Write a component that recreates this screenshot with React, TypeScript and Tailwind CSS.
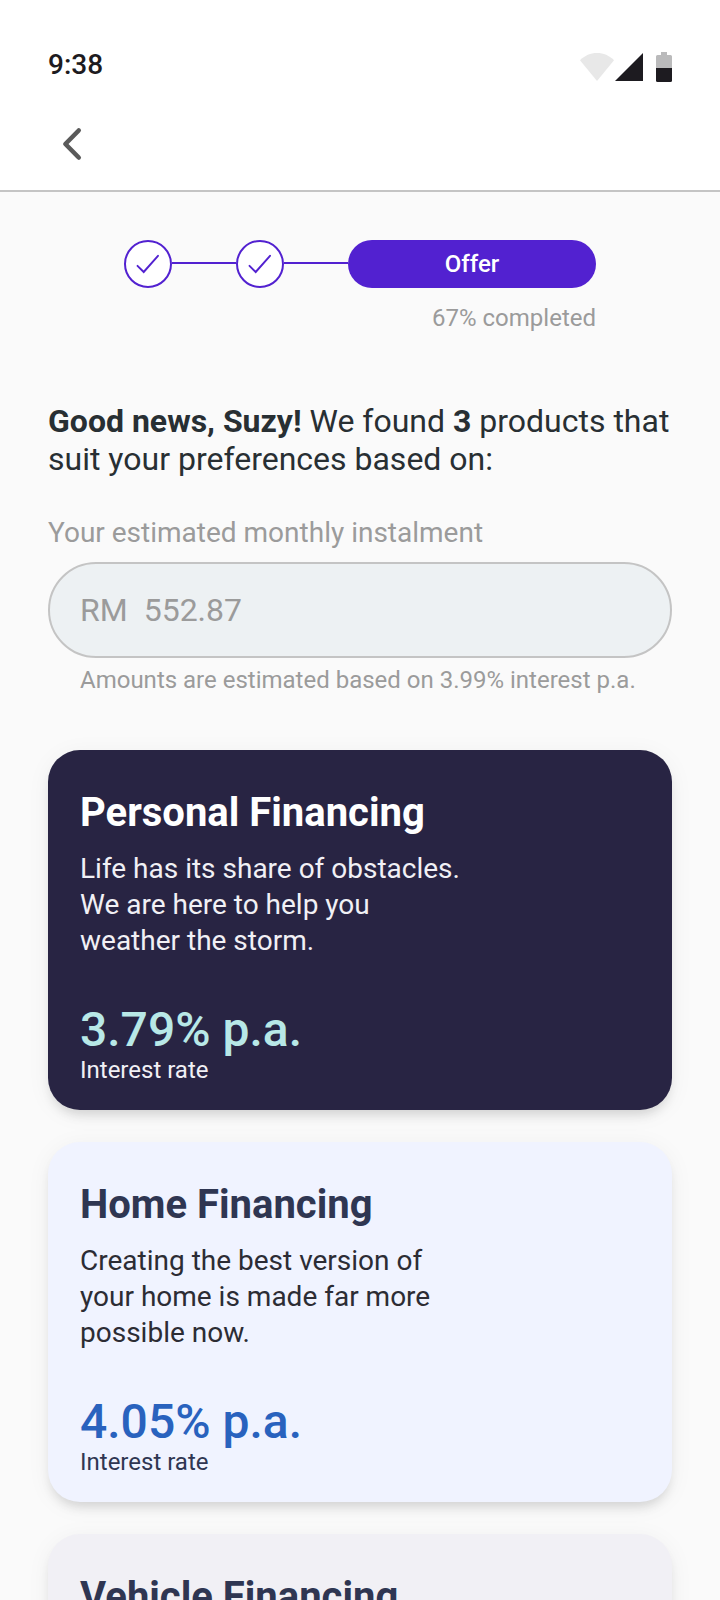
import clsx from 'clsx';

type Product = {
  title: string;
  description?: string;
  rate?: string;
  cardClass: string;
  titleClass: string;
  textClass: string;
  rateClass: string;
  captionClass: string;
};

const products: Product[] = [
  {
    title: 'Personal Financing',
    description: 'Life has its share of obstacles. We are here to help you weather the storm.',
    rate: '3.79% p.a.',
    cardClass: 'bg-[#282443]',
    titleClass: 'text-white',
    textClass: 'text-[#f1f0f5]',
    rateClass: 'text-[#b8e8e7]',
    captionClass: 'text-[#f1f0f5]',
  },
  {
    title: 'Home Financing',
    description: 'Creating the best version of your home is made far more possible now.',
    rate: '4.05% p.a.',
    cardClass: 'bg-[#f0f3ff]',
    titleClass: 'text-[#2f3652]',
    textClass: 'text-[#2c2c34]',
    rateClass: 'text-[#2962be]',
    captionClass: 'text-[#2f3652]',
  },
  {
    title: 'Vehicle Financing',
    cardClass: 'bg-[#f1f0f5]',
    titleClass: 'text-[#2f3652]',
    textClass: 'text-[#2c2c34]',
    rateClass: 'text-[#2962be]',
    captionClass: 'text-[#2f3652]',
  },
];

const StatusIcons = () => (
  <svg width="92" height="32" viewBox="0 0 92 32" aria-hidden="true">
    {/* wifi */}
    <path d="M0 8.2C4.6 3.6 10.5 1 17 1s12.400 2.600 17 7.200L17 29z" fill="#e8e8e8" />
    {/* signal */}
    <path d="M63 1v28H35z" fill="#1d1b20" />
    {/* battery */}
    <path
      d="M81 0h6v3h3.500a1.500 1.500 0 0 1 1.500 1.500V16H76V4.500A1.500 1.500 0 0 1 77.500 3H81z"
      fill="#bababb"
    />
    <path d="M76 16h16v12.500a1.500 1.500 0 0 1-1.500 1.500h-13a1.500 1.500 0 0 1-1.500-1.500z" fill="#1d1b20" />
  </svg>
);

const Header = () => (
  <header className="shrink-0 border-b-2 border-[#c4c4c4] bg-white px-12 pt-11 pb-[22px]">
    <div className="flex h-10 items-end justify-between">
      <span className="text-[28px] leading-[38px] font-medium text-[#1d1b20]">9:38</span>
      <StatusIcons />
    </div>
    <button type="button" aria-label="Back" className="mt-9 block size-12 cursor-pointer">
      <svg viewBox="0 0 48 48" fill="none" aria-hidden="true">
        <path
          d="M30.700 10.500 17.400 24l13.300 13.500"
          stroke="#5a5a5a"
          strokeWidth="4.600"
          strokeLinecap="round"
          strokeLinejoin="round"
        />
      </svg>
    </button>
  </header>
);

const CompletedStep = () => (
  <>
    <div className="flex size-12 shrink-0 items-center justify-center rounded-full border-2 border-[#5221d0] bg-white">
      <svg width="24" height="24" viewBox="0 0 24 24" fill="none" aria-hidden="true">
        <path
          d="m1.500 13.800 6.200 6.200L22 3.800"
          stroke="#5221d0"
          strokeWidth="1.900"
          strokeLinecap="round"
          strokeLinejoin="miter"
        />
      </svg>
    </div>
    <div className="mb-0.5 h-0.5 flex-1 bg-[#5221d0]" />
  </>
);

const Stepper = () => (
  <div className="mx-auto max-w-[472px]">
    <div className="flex items-center">
      <CompletedStep />
      <CompletedStep />
      <div className="flex h-12 w-62 items-center justify-center rounded-full bg-[#5221d0] text-2xl font-medium text-white">
        Offer
      </div>
    </div>
    <p className="mt-4 text-right text-2xl leading-7 text-[#9b9b9b]">67% completed</p>
  </div>
);

const ProductCard = ({ product }: { product: Product }) => (
  <article
    className={clsx(
      'min-h-90 rounded-[32px] px-8 pt-[41px] pb-7 shadow-[0_8px_12px_-4px_rgba(0,0,0,0.14),0_4px_24px_rgba(0,0,0,0.05)]',
      product.cardClass
    )}
  >
    <h2 className={clsx('text-[40px] leading-11 font-bold', product.titleClass)}>{product.title}</h2>
    {product.description && (
      <p className={clsx('mt-4 max-w-96 text-[28px] leading-9', product.textClass)}>
        {product.description}
      </p>
    )}
    {product.rate && (
      <>
        <p className={clsx('mt-[43px] text-5xl leading-14 font-medium', product.rateClass)}>
          {product.rate}
        </p>
        <p className={clsx('text-2xl leading-6', product.captionClass)}>Interest rate</p>
      </>
    )}
  </article>
);

const App = () => {
  return (
    <div className="flex h-screen flex-col bg-[#fafafa] font-[Roboto,sans-serif]">
      <Header />
      <main className="min-h-0 flex-1 overflow-y-auto px-12 pt-12 [scrollbar-width:none]">
        <Stepper />

        <h1 className="mt-[70px] text-[32px] leading-[38px] text-[#282f33]">
          <strong className="font-bold">Good news, Suzy!</strong> We found{' '}
          <strong className="font-bold">3</strong> products that suit your preferences based on:
        </h1>

        {/* Instalment */}
        <div className="mt-9">
          <label htmlFor="instalment" className="block text-[28px] leading-[38px] text-[#9b9b9b]">
            Your estimated monthly instalment
          </label>
          <div className="mt-2.5 flex h-24 items-center gap-4 rounded-full border-2 border-[#c4c4c4] bg-[#edf1f3] px-[30px] text-[32px] text-[#9b9b9b]">
            <span>RM</span>
            <input
              id="instalment"
              type="text"
              defaultValue="552.87"
              readOnly
              className="min-w-0 flex-1 bg-transparent outline-none"
            />
          </div>
          <p className="mt-2 px-8 text-2xl leading-7 text-[#9b9b9b]">
            Amounts are estimated based on 3.99% interest p.a.
          </p>
        </div>

        {/* Products */}
        <section className="mt-14 flex flex-col gap-8 pb-12">
          {products.map((product) => (
            <ProductCard key={product.title} product={product} />
          ))}
        </section>
      </main>
    </div>
  );
};

export default App;
